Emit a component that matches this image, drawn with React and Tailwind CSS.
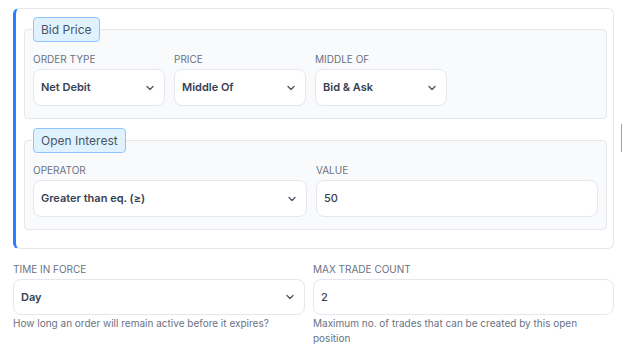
import React from 'react';
import { ChevronDown } from 'lucide-react';

const FONT = { fontFamily: 'Inter, "Noto Sans", sans-serif' };

function Label({ children }) {
  return <div className="text-[10px] leading-[12px] text-gray-500 uppercase mb-[4px]">{children}</div>;
}

function SelectBox({ value, h = 'h-[37px]' }) {
  return (
    <div className={`${h} bg-white border border-gray-200 rounded-lg flex items-center justify-between pl-[7px] pr-[8px]`}>
      <span className="text-[11px] font-semibold text-gray-700">{value}</span>
      <ChevronDown size={12} strokeWidth={2.5} className="text-gray-600" />
    </div>
  );
}

function InputBox({ value, h = 'h-[37px]' }) {
  return (
    <div className={`${h} bg-white border border-gray-200 rounded-lg flex items-center pl-[7px]`}>
      <span className="text-[11px] font-medium text-gray-700">{value}</span>
    </div>
  );
}

function Section({ title, children }) {
  return (
    <div>
      <div className="relative z-10 ml-[9px] w-fit flex items-center h-[25px] px-[7px] rounded-[4px] border border-blue-300 bg-sky-100 text-[12px] text-gray-600">
        {title}
      </div>
      <div className="-mt-[13px] bg-gray-50 border border-gray-200 rounded-[4px] pt-[23px] pb-[12px] px-[8px]">
        {children}
      </div>
    </div>
  );
}

export default function App() {
  return (
    <div className="w-[624px] h-[344px] overflow-hidden bg-white pl-[13px] pr-[10px] pt-[8px] relative" style={FONT}>
      <div className="border border-gray-200 border-l-[3px] border-l-blue-500 rounded-md pt-[8px] pb-[18px] pl-[8px] pr-[6px] flex flex-col gap-[9px]">
        <Section title="Bid Price">
          <div className="flex gap-[9px]">
            {[['Order Type', 'Net Debit'], ['Price', 'Middle Of'], ['Middle Of', 'Bid & Ask']].map(([l, v]) => (
              <div key={l} className="w-[132px]">
                <Label>{l}</Label>
                <SelectBox value={v} />
              </div>
            ))}
          </div>
        </Section>
        <Section title="Open Interest">
          <div className="grid grid-cols-[274px_1fr] gap-[9px]">
            <div>
              <Label>Operator</Label>
              <SelectBox value="Greater than eq. (≥)" />
            </div>
            <div>
              <Label>Value</Label>
              <InputBox value="50" />
            </div>
          </div>
        </Section>
      </div>

      <div className="grid grid-cols-[292px_1fr] gap-[8px] mt-[14px]">
        <div>
          <Label>Time in Force</Label>
          <SelectBox value="Day" h="h-[36px]" />
          <div className="text-[10px] leading-[15px] text-gray-500 mt-[1px]">How long an order will remain active before it expires?</div>
        </div>
        <div>
          <Label>Max Trade Count</Label>
          <InputBox value="2" h="h-[36px]" />
          <div className="text-[10px] leading-[15px] text-gray-500 mt-[1px]">Maximum no. of trades that can be created by this open position</div>
        </div>
      </div>

      <div className="absolute right-[2px] top-[124px] w-px h-[28px] bg-gray-400" />
    </div>
  );
}
